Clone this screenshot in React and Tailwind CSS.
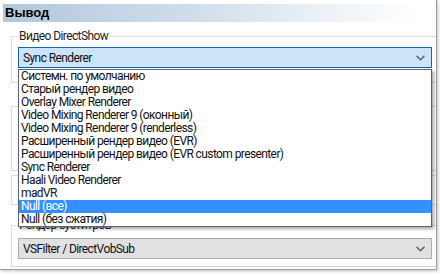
import React from "react";

const renderers = [
  "Системн. по умолчанию",
  "Старый рендер видео",
  "Overlay Mixer Renderer",
  "Video Mixing Renderer 9 (оконный)",
  "Video Mixing Renderer 9 (renderless)",
  "Расширенный рендер видео (EVR)",
  "Расширенный рендер видео (EVR custom presenter)",
  "Sync Renderer",
  "Haali Video Renderer",
  "madVR",
  "Null (все)",
  "Null (без сжатия)",
];

function Chevron() {
  return (
    <svg width="9" height="6" viewBox="0 0 9 6" className="shrink-0">
      <polyline points="0.5,0.8 4.5,4.8 8.5,0.8" fill="none" stroke="#5a5a5a" strokeWidth="1.3" />
    </svg>
  );
}

function Select({ value, focused }) {
  return (
    <div
      className={
        focused
          ? "ml-[6px] w-[414px] h-[21px] flex items-center justify-between pl-[4px] pr-[6px] border border-[#1c64a8] bg-[#cce4f7]"
          : "ml-[6px] w-[414px] h-[21px] flex items-center justify-between pl-[4px] pr-[6px] border border-[#adadad] bg-[#e1e1e1]"
      }
    >
      <span className="leading-[14px]">{value}</span>
      <Chevron />
    </div>
  );
}

export default function App() {
  return (
    <div
      className="w-[440px] h-[276px] bg-white relative overflow-hidden text-[12px] leading-[14px] tracking-[-0.6px] text-[#111]"
      style={{ fontFamily: 'Roboto, "Liberation Sans", sans-serif' }}
    >
      <div className="w-[437px] h-[270px] border-r border-b border-[#9c9c9c] shadow-[1px_1px_3px_rgba(0,0,0,0.25)] overflow-hidden pt-[4px]">
        {/* Header */}
        <div className="ml-[3px] w-[414px] h-[18px] bg-gradient-to-r from-[#b2c7dc] via-[#d3e0ec] to-white flex items-center pl-[2px]">
          <span
            className="font-bold text-[13px] leading-[16px] tracking-normal text-black"
            style={{ fontFamily: '"Liberation Sans", Arial, sans-serif' }}
          >
            Вывод
          </span>
        </div>

        {/* Video DirectShow */}
        <div className="mt-[14px] ml-[11px] h-[47px] border-t border-l border-b border-[#dcdcdc]">
          <div className="-mt-[8px] ml-[6px] w-fit h-[14px] bg-white px-[1px] text-[#1e1e1e]">
            Видео DirectShow
          </div>
          <div className="mt-[4px]">
            <Select value="Sync Renderer" focused />
          </div>
        </div>

        <div className="mt-[23px] ml-[11px] h-[65px] border-t border-l border-b border-[#dcdcdc]" />
        <div className="mt-[4px] ml-[11px] h-[30px] border-t border-l border-b border-[#dcdcdc]" />

        {/* Subtitle renderer */}
        <div className="mt-[20px] ml-[11px] h-[42px] border-t border-l border-b border-[#dcdcdc]">
          <div className="-mt-[8px] ml-[6px] w-fit h-[14px] bg-white px-[1px] text-[#1e1e1e]">
            Рендер субтитров
          </div>
          <div className="mt-[6px]">
            <Select value="VSFilter / DirectVobSub" />
          </div>
        </div>
      </div>

      {/* Open dropdown list */}
      <div className="absolute left-[18px] top-[69px] w-[414px] h-[158px] bg-white border border-[#5b6470] shadow-[2px_2px_3px_rgba(0,0,0,0.35)]">
        {renderers.map((r) => (
          <div
            key={r}
            className={
              r === "Null (все)"
                ? "h-[13px] leading-[13px] pl-[2px] bg-[#3390ff] text-white whitespace-nowrap"
                : "h-[13px] leading-[13px] pl-[2px] whitespace-nowrap"
            }
          >
            {r}
          </div>
        ))}
      </div>
    </div>
  );
}
